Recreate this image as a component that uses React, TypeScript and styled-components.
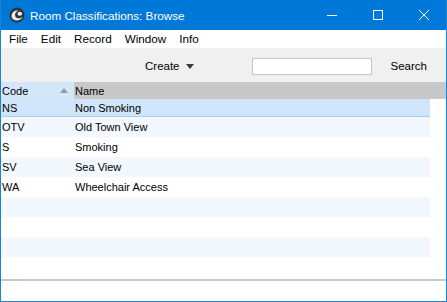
import React from "react";
import styled, { createGlobalStyle } from "styled-components";

const Global = createGlobalStyle`
  html, body { margin: 0; padding: 0; background: #ffffff; }
  body { font-family: "Liberation Sans", Arial, sans-serif; }
`;

const Window = styled.div`
  width: 447px;
  height: 302px;
  box-sizing: border-box;
  border: 1px solid #1883d7;
  border-top: none;
  display: flex;
  flex-direction: column;
  background: #ffffff;
  overflow: hidden;
`;

const TitleBar = styled.div`
  height: 30px;
  background: #0078d7;
  display: flex;
  align-items: center;
  color: #ffffff;
  margin: 0 -1px;
  padding-left: 9px;
`;

const Title = styled.span`
  font-family: "Liberation Sans", Arial, sans-serif;
  font-size: 11.7px;
  margin-left: 5px;
  flex: 1;
`;

const Controls = styled.div`
  display: flex;
  height: 30px;
`;

const ControlButton = styled.div`
  width: 46px;
  height: 30px;
  display: flex;
  align-items: center;
  justify-content: center;
`;

const MenuBar = styled.div`
  height: 18px;
  display: flex;
  align-items: center;
  padding-left: 8px;
  gap: 13px;
  font-family: "Liberation Sans", Arial, sans-serif;
  font-size: 11.7px;
  color: #000000;
`;

const MenuItem = styled.span`
  line-height: 18px;
`;

const Toolbar = styled.div`
  height: 34px;
  box-sizing: border-box;
  padding-top: 2px;
  background: #f0f0f0;
  display: flex;
  align-items: center;
  font-family: "Liberation Sans", Arial, sans-serif;
  font-size: 11.5px;
  color: #000000;
`;

const CreateButton = styled.div`
  margin-left: 144px;
  display: flex;
  align-items: center;
  gap: 6px;
`;

const SearchField = styled.div`
  margin-left: 58px;
  width: 118px;
  height: 15px;
  background: #ffffff;
  border: 1px solid #c5c5c5;
`;

const SearchLabel = styled.span`
  margin-left: 19px;
`;

const Table = styled.div`
  flex: 1;
  display: flex;
  flex-direction: column;
  font-family: "Liberation Sans", Arial, sans-serif;
  font-size: 11px;
  color: #000000;
`;

const HeaderRow = styled.div`
  height: 17px;
  display: flex;
  background: #c8c8c8;
`;

const HeaderCell = styled.div<{ $w?: number; $sorted?: boolean }>`
  width: ${(p) => (p.$w ? `${p.$w}px` : "auto")};
  flex: ${(p) => (p.$w ? "none" : 1)};
  box-sizing: border-box;
  padding-left: 1px;
  background: ${(p) => (p.$sorted ? "#d4e7f9" : "transparent")};
  display: flex;
  align-items: center;
  justify-content: space-between;
  padding-right: 6px;
`;

const Row = styled.div<{ $tone: "sel" | "alt" | "plain" }>`
  width: 429px;
  height: ${(p) => (p.$tone === "sel" ? 17 : 20)}px;
  display: flex;
  align-items: center;
  background: ${(p) =>
    p.$tone === "sel" ? "#cfe5fa" : p.$tone === "alt" ? "#f3f8fe" : "#ffffff"};
  border-bottom: ${(p) => (p.$tone === "sel" ? "1px solid #a9d0f3" : "none")};
`;

const Cell = styled.div<{ $w?: number }>`
  width: ${(p) => (p.$w ? `${p.$w}px` : "auto")};
  flex: ${(p) => (p.$w ? "none" : 1)};
  padding-left: 1px;
  box-sizing: border-box;
  white-space: nowrap;
`;

const Footer = styled.div`
  height: 22px;
  border-top: 2px solid #c8c8c8;
  box-sizing: border-box;
`;

const rows: [string, string][] = [
  ["NS", "Non Smoking"],
  ["OTV", "Old Town View"],
  ["S", "Smoking"],
  ["SV", "Sea View"],
  ["WA", "Wheelchair Access"],
  ["", ""],
  ["", ""],
  ["", ""],
  ["", ""],
];

const AppIcon = () => (
  <svg width="16" height="16" viewBox="0 0 16 16">
    <circle cx="8" cy="8" r="7.5" fill="#2f343b" />
    <path d="M2.5 9 C2.5 5 6 3 9.5 3.5 C7 4.5 5.5 6.5 6.2 9 C7 11.5 10.5 12.3 13.5 10 C12 13.5 7.5 14.5 4.5 12.5 C3.3 11.6 2.5 10.4 2.5 9 Z" fill="#e8ecf0" />
    <ellipse cx="10.8" cy="6.8" rx="2.3" ry="2" fill="#e8ecf0" />
  </svg>
);

function App() {
  return (
    <>
      <Global />
      <Window>
        <TitleBar>
          <AppIcon />
          <Title>Room Classifications: Browse</Title>
          <Controls>
            <ControlButton>
              <svg width="10" height="10" viewBox="0 0 10 10">
                <path d="M0 5.5 H10" stroke="#fff" strokeWidth="1" />
              </svg>
            </ControlButton>
            <ControlButton>
              <svg width="10" height="10" viewBox="0 0 10 10">
                <rect x="0.5" y="0.5" width="9" height="9" fill="none" stroke="#fff" strokeWidth="1" />
              </svg>
            </ControlButton>
            <ControlButton>
              <svg width="10" height="10" viewBox="0 0 10 10">
                <path d="M0 0 L10 10 M10 0 L0 10" stroke="#fff" strokeWidth="1" />
              </svg>
            </ControlButton>
          </Controls>
        </TitleBar>
        <MenuBar>
          <MenuItem>File</MenuItem>
          <MenuItem>Edit</MenuItem>
          <MenuItem>Record</MenuItem>
          <MenuItem>Window</MenuItem>
          <MenuItem>Info</MenuItem>
        </MenuBar>
        <Toolbar>
          <CreateButton>
            <span>Create</span>
            <svg width="8" height="5" viewBox="0 0 8 5">
              <path d="M0 0 H8 L4 5 Z" fill="#3c3c3c" />
            </svg>
          </CreateButton>
          <SearchField />
          <SearchLabel>Search</SearchLabel>
        </Toolbar>
        <Table>
          <HeaderRow>
            <HeaderCell $w={73} $sorted>
              <span>Code</span>
              <svg width="8" height="5" viewBox="0 0 8 5">
                <path d="M0 5 H8 L4 0 Z" fill="#9a9a9a" />
              </svg>
            </HeaderCell>
            <HeaderCell>Name</HeaderCell>
          </HeaderRow>
          {rows.map(([code, name], i) => (
            <Row key={i} $tone={i === 0 ? "sel" : i % 2 === 1 ? "alt" : "plain"}>
              <Cell $w={73}>{code}</Cell>
              <Cell>{name}</Cell>
            </Row>
          ))}
        </Table>
        <Footer />
      </Window>
    </>
  );
}

export default App;
